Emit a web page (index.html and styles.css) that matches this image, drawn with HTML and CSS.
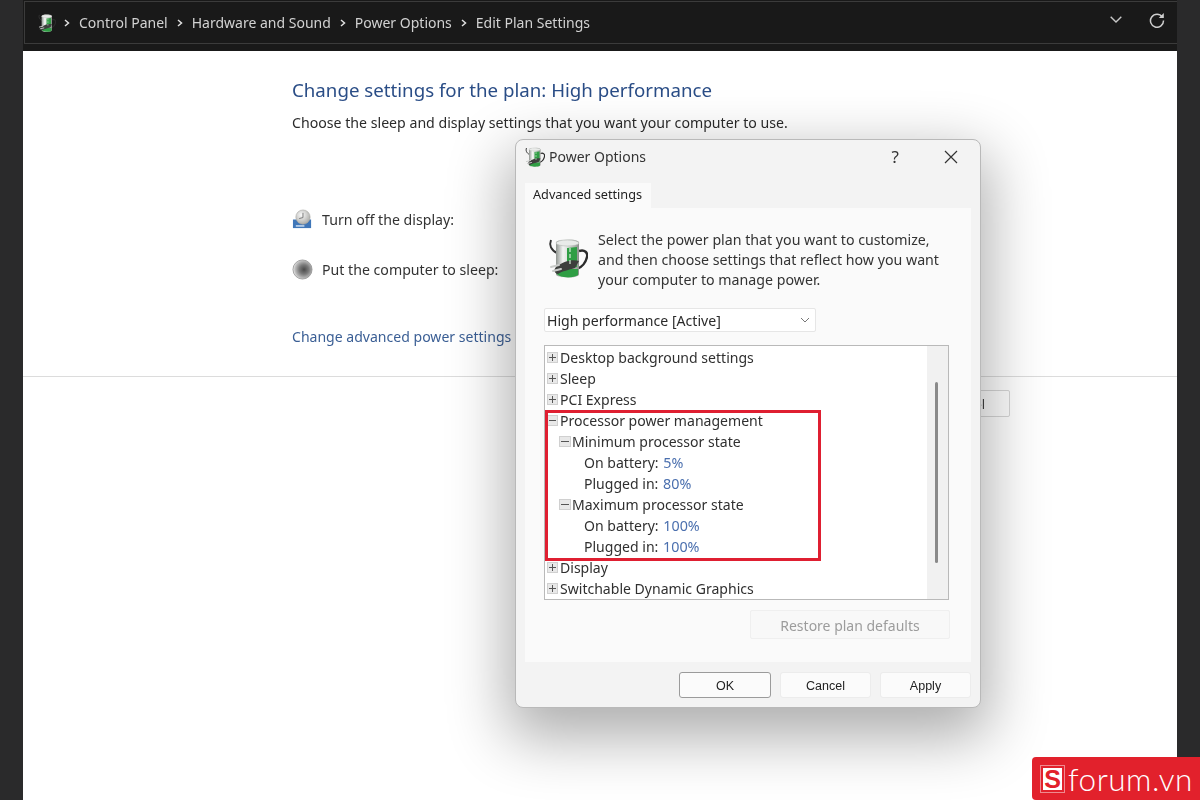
FILE: index.html
```html
<!DOCTYPE html>
<html lang="en">
<head>
<meta charset="utf-8">
<title>Edit Plan Settings</title>
<link rel="stylesheet" href="styles.css">
</head>
<body>
<svg class="defs" width="0" height="0" aria-hidden="true">
  <defs>
    <linearGradient id="can" x1="0" y1="0" x2="1" y2="0">
      <stop offset="0" stop-color="#8f9490"/><stop offset=".3" stop-color="#f2f4f2"/><stop offset=".6" stop-color="#d5d8d5"/><stop offset="1" stop-color="#8b8f8b"/>
    </linearGradient>
    <symbol id="battery" viewBox="0 0 40 42">
      <path d="M3 3C1 8 3 13 9 16" fill="none" stroke="#333" stroke-width="2"/>
      <path d="M31 14c6-2 9 2 8 6-1 5-5 10-10 12" fill="none" stroke="#2b2b2b" stroke-width="2.400"/>
      <path d="M8 6c0-5 23-5 23 0v31c0 5-23 5-23 0z" fill="url(#can)"/>
      <ellipse cx="19.500" cy="6" rx="11.500" ry="3" fill="#e9ebe9" stroke="#b5b8b5" stroke-width=".6"/>
      <path d="M19 11l10-1v20l-10 2z" fill="#2f9e44"/>
      <path d="M8 35c0 6 17 7 22 3v-6H8z" fill="#2f9e44"/>
      <path d="M8 30c7-5 15-8 23-6l-4 7c-6 2-13 3-17 6-3 0-5-4-2-7z" fill="#3d3f3d"/>
      <path d="M3 30l8-2M5 34l8-2" stroke="#c9cbc9" stroke-width="2" stroke-linecap="round"/>
      <path d="M22 11v4M22 17v4M22 23v4" stroke="#d7ecd9" stroke-width="1.200"/>
    </symbol>
  </defs>
</svg>
<div class="app">
  <header class="toolbar">
    <div class="address">
      <nav class="crumbs">
        <svg class="crumb-icon"><use href="#battery"/></svg>
        <svg class="chev" viewBox="0 0 6 8"><path d="M1 1l3.500 3L1 7" /></svg><span>Control Panel</span>
        <svg class="chev" viewBox="0 0 6 8"><path d="M1 1l3.500 3L1 7" /></svg><span>Hardware and Sound</span>
        <svg class="chev" viewBox="0 0 6 8"><path d="M1 1l3.500 3L1 7" /></svg><span>Power Options</span>
        <svg class="chev" viewBox="0 0 6 8"><path d="M1 1l3.500 3L1 7" /></svg><span>Edit Plan Settings</span>
      </nav>
      <div class="tools">
        <svg class="tool-down" viewBox="0 0 12 7"><path d="M.7.7L6 6 11.300.7"/></svg>
        <svg class="tool-refresh" viewBox="0 0 16 16"><path d="M13.300 5A6.500 6.500 0 1 0 14.500 8.500"/><path class="fill" d="M14.800 1v5h-5z"/></svg>
      </div>
    </div>
  </header>

  <main class="sheet">
    <section class="plan">
      <h1>Change settings for the plan: High performance</h1>
      <p class="lead">Choose the sleep and display settings that you want your computer to use.</p>
      <div class="setting first">
        <svg class="set-icon" viewBox="0 0 22 22">
          <defs><radialGradient id="clk" cx=".4" cy=".35" r=".7"><stop offset="0" stop-color="#fafafa"/><stop offset="1" stop-color="#a9a9a5"/></radialGradient></defs>
          <rect x="1" y="11" width="19" height="9" fill="#3f76b8"/>
          <rect x="4" y="17" width="9" height="1.500" fill="#cfe0f2"/>
          <circle cx="11.500" cy="8.500" r="7.500" fill="url(#clk)" stroke="#a3a3a0" stroke-width=".6"/>
          <path d="M11.500 4v5l-4 1" fill="none" stroke="#777" stroke-width="1"/>
        </svg>
        <span>Turn off the display:</span>
      </div>
      <div class="setting second">
        <svg class="set-icon" viewBox="0 0 22 22">
          <defs><radialGradient id="moon" cx=".58" cy=".5" r=".55"><stop offset="0" stop-color="#4a4a4a"/><stop offset=".45" stop-color="#7a7a7a"/><stop offset=".85" stop-color="#bdbdbd"/><stop offset="1" stop-color="#e2e2e2"/></radialGradient></defs>
          <circle cx="11" cy="11" r="10" fill="url(#moon)" stroke="#8e8e8e" stroke-width=".8"/>
        </svg>
        <span>Put the computer to sleep:</span>
      </div>
      <a class="link">Change advanced power settings</a>
    </section>
    <footer class="plan-foot">
      <button class="ghost">Cancel</button>
    </footer>

    <div class="dialog">
      <div class="titlebar">
        <svg class="title-icon"><use href="#battery"/></svg>
        <span class="title-text">Power Options</span>
        <span class="help">?</span>
        <svg class="close" viewBox="0 0 14 14"><path d="M1 1l12 12M13 1L1 13"/></svg>
      </div>
      <div class="tabs"><div class="tab">Advanced settings</div></div>
      <div class="panel">
        <div class="intro">
          <svg class="intro-icon"><use href="#battery"/></svg>
          <p>Select the power plan that you want to customize, and then choose settings that reflect how you want your computer to manage power.</p>
        </div>
        <div class="select">
          <span>High performance [Active]</span>
          <svg viewBox="0 0 10 6"><path d="M1 1l4 4 4-4"/></svg>
        </div>
        <div class="tree">
          <ul class="rows">
            <li class="row"><i class="box plus"></i>Desktop background settings</li>
            <li class="row"><i class="box plus"></i>Sleep</li>
            <li class="row"><i class="box plus"></i>PCI Express</li>
            <li class="row"><i class="box minus"></i>Processor power management</li>
            <li class="row l1"><i class="box minus"></i>Minimum processor state</li>
            <li class="row l2">On battery:&nbsp;<b>5%</b></li>
            <li class="row l2">Plugged in:&nbsp;<b>80%</b></li>
            <li class="row l1"><i class="box minus"></i>Maximum processor state</li>
            <li class="row l2">On battery:&nbsp;<b>100%</b></li>
            <li class="row l2">Plugged in:&nbsp;<b>100%</b></li>
            <li class="row"><i class="box plus"></i>Display</li>
            <li class="row"><i class="box plus"></i>Switchable Dynamic Graphics</li>
          </ul>
          <div class="scroll"><div class="thumb"></div></div>
          <div class="highlight"></div>
        </div>
        <div class="restore-row"><button class="restore">Restore plan defaults</button></div>
      </div>
      <div class="actions">
        <button class="btn primary">OK</button>
        <button class="btn">Cancel</button>
        <button class="btn">Apply</button>
      </div>
    </div>
  </main>
</div>
<div class="brand">
  <span class="brand-s"><span class="brand-mark">S</span></span><span class="brand-name">forum.vn</span>
</div>
</body>
</html>
```
FILE: styles.css
```css
* { box-sizing: border-box; }
html, body { margin: 0; height: 100%; overflow: hidden; }
body { background: #2a2a2b; font-family: "Noto Sans", "Open Sans", sans-serif; color: #2b2b2b; }
.defs { position: absolute; }
.app { height: 800px; display: flex; flex-direction: column; margin: 0 23px; filter: blur(.35px); }

.toolbar { height: 51px; background: #191919; padding: 1px 0 7px 1px; flex: none; }
.address { height: 43px; border: 1px solid #3b3b3b; border-right: 0; display: flex; align-items: center; justify-content: space-between; padding: 0 12px 0 13px; }
.crumbs { display: flex; align-items: center; color: #d2d2d2; font-size: 14px; }
.crumb-icon { width: 18px; height: 24px; margin-right: 8px; }
.chev { width: 6px; height: 8px; margin-right: 9px; fill: none; stroke: #e0e0e0; stroke-width: 1.500; }
.crumbs span { margin-right: 9px; }
.tools { display: flex; align-items: center; gap: 27px; padding-bottom: 6px; }
.tool-down { width: 12px; height: 7px; fill: none; stroke: #c8c8c8; stroke-width: 1.400; }
.tool-refresh { width: 16px; height: 16px; fill: none; stroke: #cfcfcf; stroke-width: 1.500; }
.tool-refresh .fill { fill: #cfcfcf; stroke: none; }

.sheet { flex: 1; background: #fff; position: relative; overflow: hidden; }
.plan { height: 326px; padding: 26px 0 0 269px; border-bottom: 1px solid #dcdcdc; }
h1 { margin: 0; font-weight: 400; font-size: 18.700px; line-height: 26px; color: #2a4d86; }
.lead { margin: 10px 0 0; font-size: 14.150px; line-height: 20px; color: #2b2b2b; }
.setting { display: flex; align-items: center; gap: 9px; font-size: 14.150px; height: 22px; color: #333; }
.first { margin-top: 75px; }
.second { margin-top: 28px; }
.set-icon { width: 21px; height: 21px; }
.link { display: block; margin-top: 47px; font-size: 14.050px; line-height: 20px; color: #3b5f95; }
.plan-foot { padding: 13px 167px 0 0; display: flex; justify-content: flex-end; }
.ghost { width: 90px; height: 27px; background: #fff; border: 1px solid #d8d8d8; border-radius: 2px; font: inherit; font-size: 13px; color: #444; }

.dialog { position: absolute; left: 492px; top: 88px; width: 466px; height: 569px; background: #f3f3f3; border: 1px solid #b9b9b9; border-radius: 8px; box-shadow: 0 22px 60px 8px rgba(0,0,0,.32); display: flex; flex-direction: column; padding: 0 9px 8px 9px; }
.titlebar { height: 35px; flex: none; display: flex; align-items: center; font-size: 14px; color: #333; padding: 0 13px 2px 0; }
.title-icon { width: 20px; height: 22px; margin-right: 4px; }
.title-text { flex: 1; }
.help { font-size: 17px; margin-right: 45px; }
.close { width: 14px; height: 14px; fill: none; stroke: #333; stroke-width: 1.200; }
.tabs { height: 33px; flex: none; display: flex; align-items: flex-end; padding-top: 8px; }
.tab { width: 126px; height: 25px; background: #fafafa; font-size: 12.700px; line-height: 22px; padding-left: 8px; color: #222; }
.panel { height: 454px; flex: none; background: #fafafa; padding: 0 21px 0 19px; }
.intro { height: 100px; display: flex; padding: 22px 0 0 4px; }
.intro-icon { width: 40px; height: 42px; flex: none; margin: 7px 10px 0 0; }
.intro p { margin: 0; font-size: 14.200px; line-height: 20px; color: #333; }
.select { width: 272px; height: 24px; background: #fff; border: 1px solid #e6e6e6; border-radius: 2px; display: flex; align-items: center; justify-content: space-between; padding: 0 5px 0 2px; font-size: 14.100px; color: #2b2b2b; }
.select svg { width: 10px; height: 6px; fill: none; stroke: #777; stroke-width: 1; }
.tree { position: relative; margin-top: 13px; width: 405px; height: 255px; background: #fff; border: 1px solid #b9b9b9; display: flex; justify-content: space-between; }
.rows { list-style: none; margin: 0; padding: 1px 0 0 2px; font-size: 14.050px; }
.row { height: 21px; display: flex; align-items: center; white-space: nowrap; color: #303030; }
.row b { font-weight: 400; color: #4a6fae; margin-left: 1px; font-size: 14.300px; }
.l1 { padding-left: 12px; }
.l2 { padding-left: 37px; }
.box { width: 11px; height: 11px; margin-right: 2px; flex: none; background: #e8e8e8; border: 1px solid #d0d0d0; position: relative; }
.l1 .box { width: 12px; margin-right: 1px; }
.box::before { content: ""; position: absolute; left: 1px; right: 1px; top: 4px; height: 1px; background: #555; }
.plus::after { content: ""; position: absolute; top: 1px; bottom: 1px; left: 4px; width: 1px; background: #555; }
.scroll { width: 21px; background: #f1f1f1; padding: 36px 0 0 8px; }
.thumb { width: 3px; height: 181px; background: #8a8a8a; border-radius: 2px; }
.highlight { position: absolute; left: 0; top: 64px; width: 276px; height: 151px; border: 3px solid #df1f31; }
.restore-row { margin-top: 10px; display: flex; padding-left: 206px; }
.restore { width: 200px; height: 29px; background: #f8f8f8; border: 1px solid #efefef; border-radius: 2px; font: inherit; font-size: 14px; color: #9c9c9c; padding: 2px 0 0; }
.actions { display: flex; gap: 9px; padding: 10px 0 0 154px; }
.btn { width: 91px; height: 26px; background: #fbfbfb; border: 1px solid #ececec; border-radius: 3px; font-family: "Liberation Sans", sans-serif; font-size: 12.500px; color: #222; padding: 2px 0 0; }
.primary { border: 1px solid #9b9b9b; width: 92px; }

.brand { position: absolute; left: 1032px; top: 757px; width: 168px; height: 43px; background: #e2212c; border-radius: 4px 0 0 4px; display: flex; align-items: center; padding-left: 8px; color: #fff; }
.brand-s { width: 25px; height: 28px; border: 1px solid #ef8a90; padding: 2px; display: flex; }
.brand-mark { flex: 1; background: #fff; color: #e2212c; font-family: "Liberation Sans", sans-serif; font-weight: 700; font-size: 25px; line-height: 22px; text-align: center; }
.brand-name { font-family: "Lato", sans-serif; font-weight: 300; font-size: 31.500px; margin-left: 3px; letter-spacing: .5px; }
```
